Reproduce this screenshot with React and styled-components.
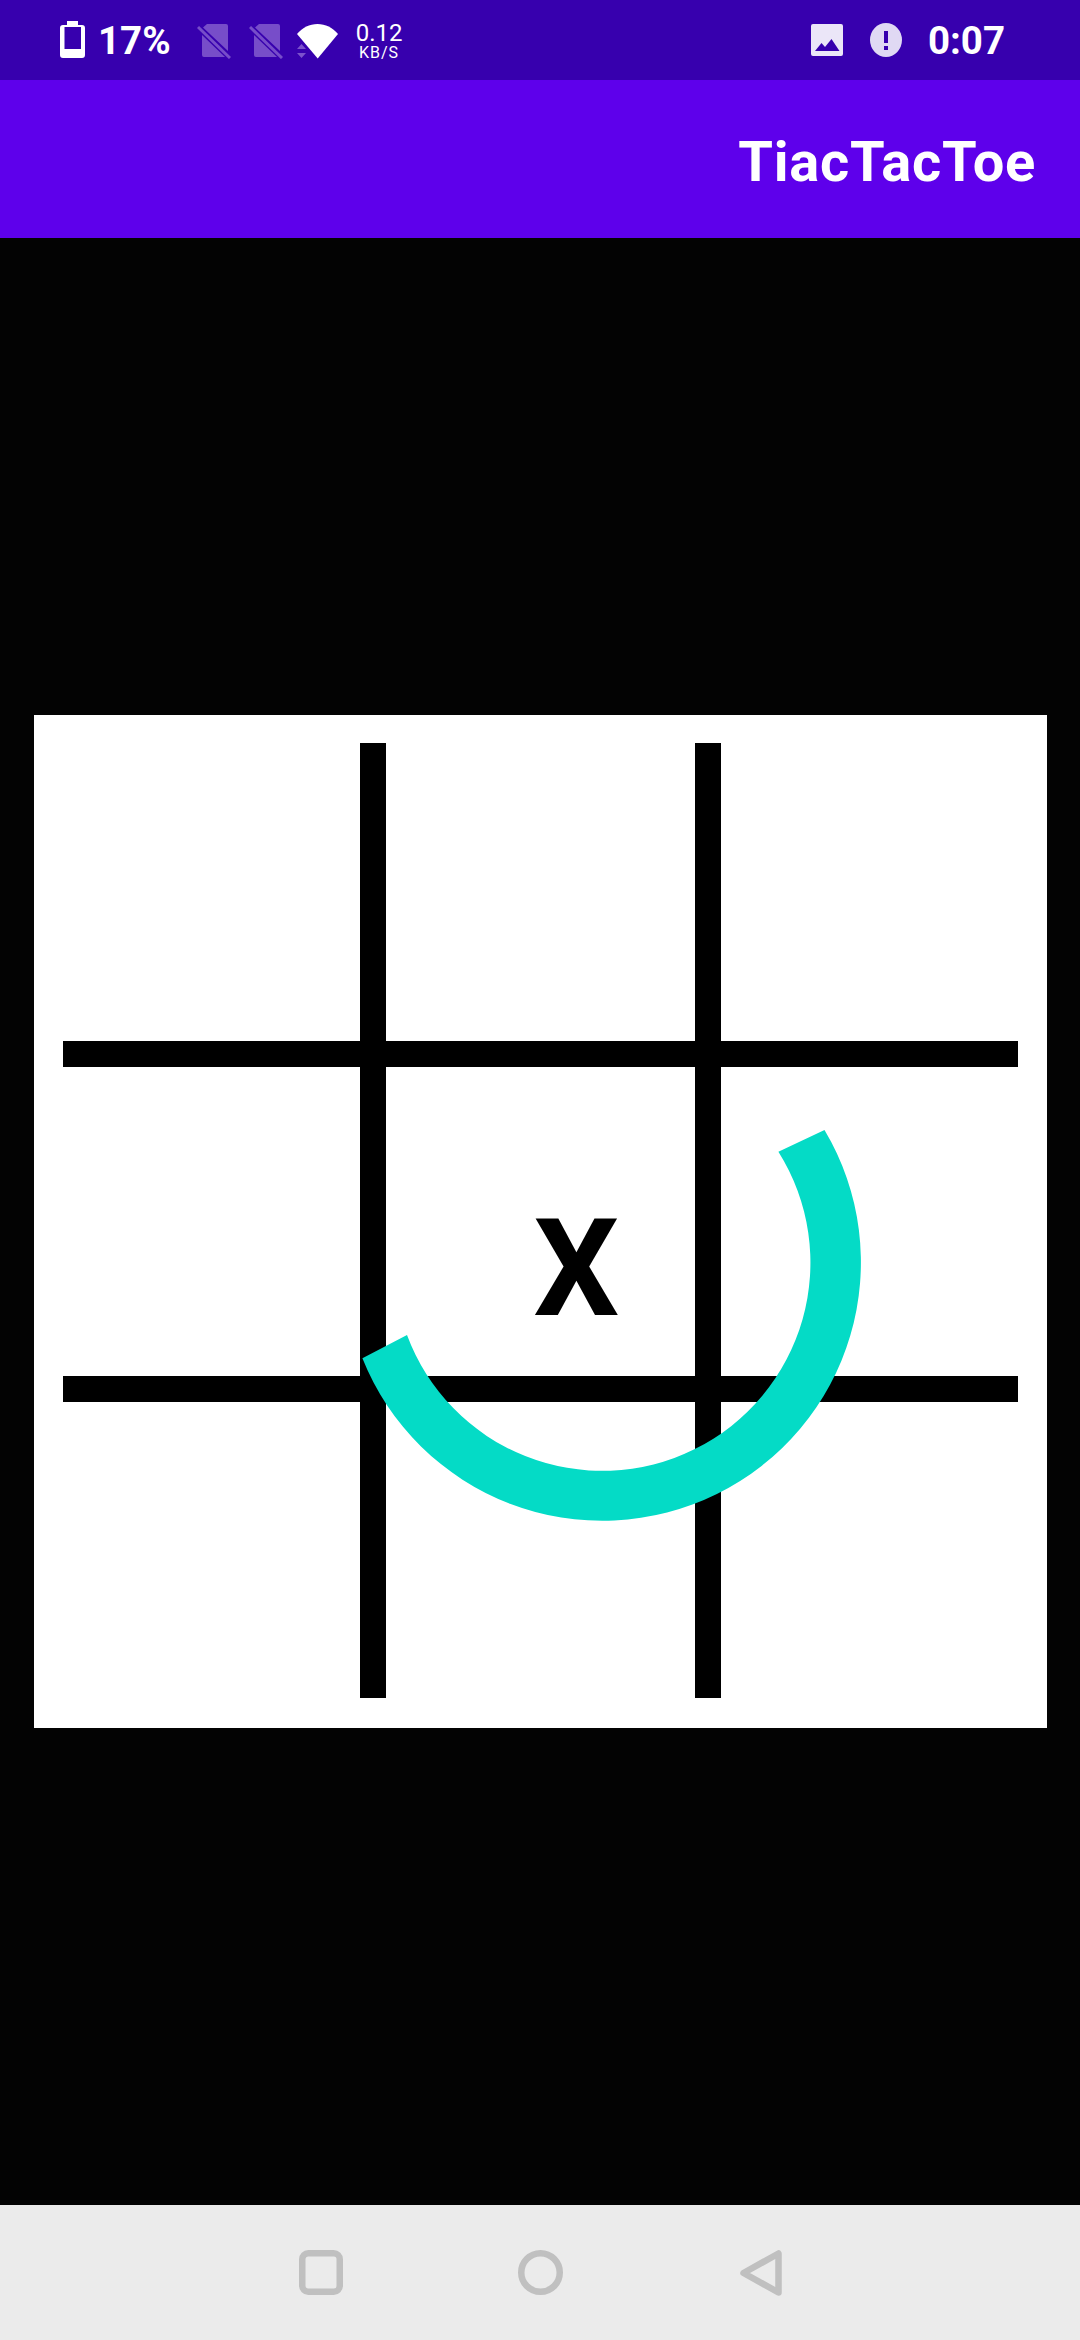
import React from 'react';
import styled, { createGlobalStyle } from 'styled-components';

const GlobalStyle = createGlobalStyle`
  html, body {
    margin: 0;
    padding: 0;
    background: #030303;
  }
  body {
    font-family: Roboto, "Liberation Sans", sans-serif;
  }
`;

const Screen = styled.div`
  width: 1080px;
  height: 2340px;
  display: flex;
  flex-direction: column;
  overflow: hidden;
`;

const StatusBar = styled.div`
  height: 80px;
  flex: none;
  display: flex;
  align-items: center;
  justify-content: space-between;
  padding: 2px 75px 0 60px;
  box-sizing: border-box;
  background: #3700ae;
  color: #fff;
`;

const StatusGroup = styled.div`
  display: flex;
  align-items: center;
`;

const StatusIcon = styled.svg`
  display: block;
  flex: none;
  margin-left: ${(p) => p.$left || 0}px;
  margin-bottom: ${(p) => p.$lift || 0}px;
`;

const StatusText = styled.span`
  font-size: 38.5px;
  font-weight: 700;
  line-height: 37px;
  margin-bottom: 2px;
  margin-left: ${(p) => p.$left || 0}px;
`;

const Speed = styled.div`
  margin-left: 18px;
  display: flex;
  flex-direction: column;
  align-items: center;
  font-weight: 400;
  div:first-child {
    font-size: 24px;
    line-height: 24px;
  }
  div:last-child {
    font-size: 16px;
    line-height: 16px;
    letter-spacing: 1px;
  }
`;

const AppBar = styled.header`
  height: 158px;
  flex: none;
  display: flex;
  align-items: center;
  justify-content: flex-end;
  padding: 6px 44px 0 0;
  box-sizing: border-box;
  background: #5e00eb;
`;

const Title = styled.h1`
  margin: 0;
  color: #fff;
  font-size: 56px;
  font-weight: 700;
  line-height: 56px;
  letter-spacing: 0.75px;
`;

const Content = styled.main`
  flex: 1;
  display: flex;
  align-items: center;
  justify-content: center;
  background: #030303;
`;

const Board = styled.div`
  position: relative;
  width: 1013px;
  height: 1013px;
  background: #fff;
`;

const BoardDrawing = styled.svg`
  display: block;
  width: 100%;
  height: 100%;
`;

const Mark = styled.span`
  position: absolute;
  left: 500px;
  top: 487px;
  color: #000;
  font-size: 135px;
  font-weight: 700;
  line-height: 135px;
`;

const NavBar = styled.nav`
  height: 135px;
  flex: none;
  display: flex;
  align-items: center;
  gap: 175px;
  padding-left: 299px;
  box-sizing: border-box;
  background: #ebebeb;
`;

const NavIcon = styled.svg`
  display: block;
  flex: none;
  fill: none;
  stroke: #c0c0c0;
  stroke-width: 6.5;
  stroke-linejoin: round;
`;

const Battery = () => (
  <StatusIcon $lift={3} width="25" height="37" viewBox="0 0 25 37">
    <path fill="#fff" d="M7 0h11v4h4a3 3 0 0 1 3 3v27a3 3 0 0 1-3 3H3a3 3 0 0 1-3-3V7a3 3 0 0 1 3-3h4z" />
    <rect x="4.500" y="6" width="16.500" height="22" fill="#3700ae" />
  </StatusIcon>
);

const NoSim = ({ left }) => (
  <StatusIcon $left={left} width="34" height="35" viewBox="0 0 34 35">
    <path fill="#774dc9" d="M10 0H29a2 2 0 0 1 2 2V27L6 3.500zM5 11 28 33H7a2 2 0 0 1-2-2z" />
    <path fill="none" stroke="#774dc9" strokeWidth="3" d="M1 3 33 34" />
  </StatusIcon>
);

const Wifi = () => (
  <StatusIcon $left={14} width="41" height="35" viewBox="0 0 41 35">
    <path fill="#fff" d="M0 10C5.500 3.500 12.500 0 20.500 0S35.500 3.500 41 10L20.700 34.500z" />
    <path fill="#7c52cc" d="M4.500 20l4.500 5H0zM4.500 34 0 29h9z" />
  </StatusIcon>
);

const ImageNote = () => (
  <StatusIcon $lift={2} width="32" height="32" viewBox="0 0 32 32">
    <path fill="#ebe6f8" fillRule="evenodd" d="M2 0h28a2 2 0 0 1 2 2v28a2 2 0 0 1-2 2H2a2 2 0 0 1-2-2V2a2 2 0 0 1 2-2zM4 27H28.500L20.500 15 14 23 10.500 19z" />
  </StatusIcon>
);

const AlertNote = () => (
  <StatusIcon $left={27} $lift={2} width="32" height="34" viewBox="0 0 32 34">
    <ellipse cx="16" cy="17" rx="16" ry="17" fill="#e0d9f4" />
    <path fill="#3700ae" d="M14 8h4v12h-4zM14 23h4v4h-4z" />
  </StatusIcon>
);

const App = () => (
  <>
    <GlobalStyle />
    <Screen>
      <StatusBar>
        <StatusGroup>
          <Battery />
          <StatusText $left={13}>17%</StatusText>
          <NoSim left={26} />
          <NoSim left={18} />
          <Wifi />
          <Speed>
            <div>0.12</div>
            <div>KB/S</div>
          </Speed>
        </StatusGroup>
        <StatusGroup>
          <ImageNote />
          <AlertNote />
          <StatusText $left={26}>0:07</StatusText>
        </StatusGroup>
      </StatusBar>
      <AppBar>
        <Title>TiacTacToe</Title>
      </AppBar>
      <Content>
        <Board>
          <BoardDrawing viewBox="0 0 1013 1013">
            <rect x="326" y="28" width="26" height="955" fill="#000" />
            <rect x="661" y="28" width="26" height="955" fill="#000" />
            <rect x="29" y="326" width="955" height="26" fill="#000" />
            <rect x="29" y="661" width="955" height="26" fill="#000" />
            <path
              d="M790.500 415A258.500 258.500 0 1 1 328.400 643.300L373 620A208.200 208.200 0 1 0 744.400 436.700Z"
              fill="#04dbc6"
            />
          </BoardDrawing>
          <Mark>X</Mark>
        </Board>
      </Content>
      <NavBar>
        <NavIcon width="44" height="45" viewBox="0 0 44 45">
          <rect x="3.250" y="3.250" width="37.500" height="38.500" rx="6" />
        </NavIcon>
        <NavIcon width="45" height="45" viewBox="0 0 45 45">
          <circle cx="22.500" cy="22.500" r="19.250" />
        </NavIcon>
        <NavIcon width="44" height="46" viewBox="0 0 44 46">
          <path d="M40.500 3.500V42.500L5.500 23z" />
        </NavIcon>
      </NavBar>
    </Screen>
  </>
);

export default App;
